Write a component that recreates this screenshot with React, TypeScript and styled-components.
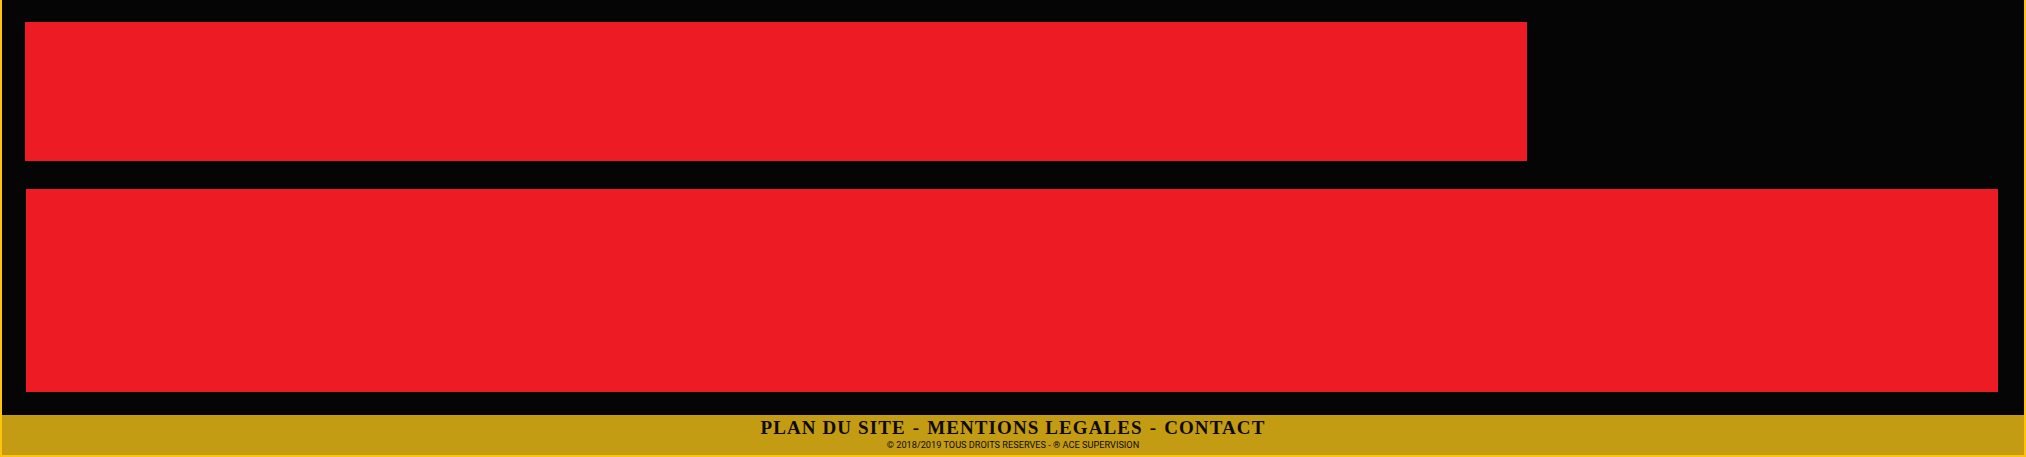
import React from 'react'
import styled, { createGlobalStyle } from 'styled-components'

const GlobalStyle = createGlobalStyle`
  html, body {
    margin: 0;
    padding: 0;
    background: #050505;
  }
`

const StyledPage = styled.div`
  width: 2026px;
  height: 457px;
  display: flex;
  flex-direction: column;
  box-sizing: border-box;
  border-left: 2px solid #ffc20e;
  border-right: 2px solid #ffc20e;
  border-bottom: 2px solid #ffc20e;
  background: #050505;
  overflow: hidden;
`

const StyledMain = styled.main`
  height: 415px;
  display: flex;
  flex-direction: column;
  align-items: flex-start;
  gap: 28px;
  padding: 22px 0 0 23px;
  box-sizing: border-box;
`

const StyledBanner = styled.div<{ $width: number; $height: number; $shift?: number }>`
  width: ${(props) => props.$width}px;
  height: ${(props) => props.$height}px;
  margin-left: ${(props) => props.$shift ?? 0}px;
  background: #ed1c24;
`

const StyledFooter = styled.footer`
  height: 40px;
  display: flex;
  flex-direction: column;
  align-items: center;
  background: #c49c13;
  color: #0d0a02;
`

const StyledLinks = styled.div`
  display: flex;
  gap: 7px;
  margin-top: 2px;
  font-family: 'Liberation Serif', serif;
  font-weight: 700;
  font-size: 19px;
  line-height: 22px;
  letter-spacing: 1.1px;
  white-space: nowrap;
`

const StyledLink = styled.a`
  color: inherit;
  text-decoration: none;
`

const StyledCopyright = styled.p`
  margin: 0;
  font-family: Roboto, sans-serif;
  font-size: 9.2px;
  line-height: 12px;
  white-space: nowrap;
`

export default function App() {
  return (
    <>
      <GlobalStyle />
      <StyledPage>
        <StyledMain>
          <StyledBanner $width={1502} $height={139} />
          <StyledBanner $width={1972} $height={203} $shift={1} />
        </StyledMain>
        <StyledFooter>
          <StyledLinks>
            <StyledLink>PLAN DU SITE</StyledLink>
            <span>-</span>
            <StyledLink>MENTIONS LEGALES</StyledLink>
            <span>-</span>
            <StyledLink>CONTACT</StyledLink>
          </StyledLinks>
          <StyledCopyright>© 2018/2019 TOUS DROITS RESERVES - ® ACE SUPERVISION</StyledCopyright>
        </StyledFooter>
      </StyledPage>
    </>
  )
}
